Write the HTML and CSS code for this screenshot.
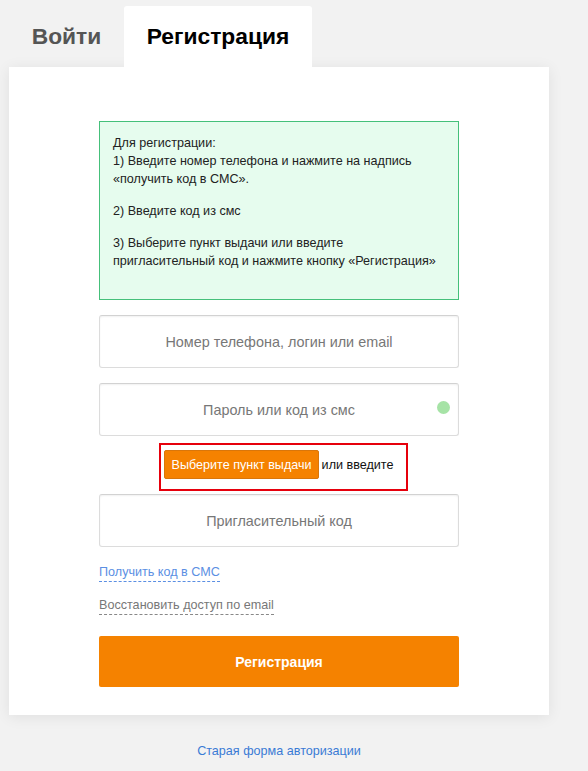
FILE: index.html
```html
<!DOCTYPE html>
<html lang="ru">
<head>
<meta charset="utf-8">
<title>Регистрация</title>
<link rel="stylesheet" href="styles.css">
</head>
<body>
<div class="wrap">
  <div class="tabs">
    <div class="tab">Войти</div>
    <div class="tab active">Регистрация</div>
  </div>
  <div class="card">
    <div class="form">
      <div class="info">
        <p>Для регистрации:<br>1) Введите номер телефона и нажмите на надпись «получить код в СМС».</p>
        <p>2) Введите код из смс</p>
        <p>3) Выберите пункт выдачи или введите пригласительный код и нажмите кнопку «Регистрация»</p>
      </div>
      <div class="field"><input class="input" type="text" placeholder="Номер телефона, логин или email"></div>
      <div class="field field-pass"><input class="input" type="text" placeholder="Пароль или код из смс"><span class="dot"></span></div>
      <div class="pick-row">
        <div class="highlight">
          <button class="pick-btn" type="button">Выберите пункт выдачи</button>
          <span class="pick-text">или введите</span>
        </div>
      </div>
      <div class="field"><input class="input" type="text" placeholder="Пригласительный код"></div>
      <div class="links">
        <a class="link link-blue" href="#">Получить код в СМС</a>
        <a class="link link-gray" href="#">Восстановить доступ по email</a>
      </div>
      <button class="submit" type="button">Регистрация</button>
    </div>
  </div>
  <div class="footer"><a class="old-link" href="#">Старая форма авторизации</a></div>
</div>
</body>
</html>
```
FILE: styles.css
```css
* { box-sizing: border-box; }
html, body { margin: 0; padding: 0; }
body {
  background: #f2f2f2;
  font-family: "Liberation Sans", Arial, sans-serif;
  color: #222;
}
.wrap {
  width: 540px;
  margin-left: 9px;
  padding-top: 6px;
}
.tabs {
  display: flex;
  height: 61px;
}
.tab {
  display: flex;
  align-items: center;
  justify-content: center;
  font-size: 22.8px;
  font-weight: bold;
  color: #555;
  width: 115px;
}
.tab.active {
  width: 188px;
  background: #fff;
  color: #000;
  border-radius: 3px 3px 0 0;
  position: relative;
  z-index: 1;
}
.card {
  background: #fff;
  box-shadow: 0 2px 14px rgba(0, 0, 0, 0.08);
  padding: 54px 90px 28px;
}
.form { width: 360px; }
.info {
  background: #e6fcee;
  border: 1px solid #45c07a;
  padding: 12px 13px 15px;
  font-size: 12.6px;
  line-height: 18px;
  color: #222;
}
.info p { margin: 0 0 14px; }
.field {
  position: relative;
  margin-top: 15px;
}
.input {
  display: block;
  width: 360px;
  height: 53px;
  border: 1px solid #dcdcdc;
  border-top-color: #d2d2d2;
  border-radius: 3px;
  box-shadow: inset 0 1px 2px rgba(0, 0, 0, 0.06);
  background: #fff;
  text-align: center;
  font-family: "Liberation Sans", Arial, sans-serif;
  font-size: 14.4px;
  color: #333;
  outline: none;
}
.input::placeholder { color: #777; opacity: 1; }
.dot {
  position: absolute;
  right: 9px;
  top: 18px;
  width: 13px;
  height: 13px;
  border-radius: 50%;
  background: #a6e3a6;
}
.pick-row {
  display: flex;
  justify-content: center;
  margin-top: 7px;
}
.highlight {
  display: flex;
  align-items: center;
  margin-left: 9px;
  border: 2px solid #e6000c;
  padding: 5px 12px 10px 3px;
}
.pick-btn {
  height: 29px;
  padding: 0 6px;
  border: 1px solid #d9760a;
  border-radius: 2px;
  background: #f58200;
  color: #fff;
  font-family: "Liberation Sans", Arial, sans-serif;
  font-size: 12.6px;
  cursor: pointer;
}
.pick-text {
  margin-left: 3px;
  font-size: 12.6px;
  color: #111;
}
.pick-row + .field { margin-top: 3px; }
.links {
  display: flex;
  flex-direction: column;
  align-items: flex-start;
  gap: 16px;
  margin-top: 18px;
}
.link {
  display: inline-block;
  font-size: 12.6px;
  line-height: 15px;
  padding-bottom: 1px;
  text-decoration: none;
  border-bottom: 1px dashed;
}
.link-blue { color: #5b8fe3; border-bottom-color: #5b8fe3; }
.link-gray { color: #777; border-bottom-color: #888; }
.submit {
  display: block;
  width: 360px;
  height: 51px;
  margin-top: 21px;
  border: none;
  border-radius: 2px;
  background: #f58200;
  color: #fff;
  font-family: "Liberation Sans", Arial, sans-serif;
  font-size: 14px;
  font-weight: bold;
  cursor: pointer;
}
.footer {
  text-align: center;
  margin-top: 27px;
  line-height: 16px;
}
.old-link {
  font-size: 12.6px;
  color: #3a7bd5;
  text-decoration: none;
}
```
